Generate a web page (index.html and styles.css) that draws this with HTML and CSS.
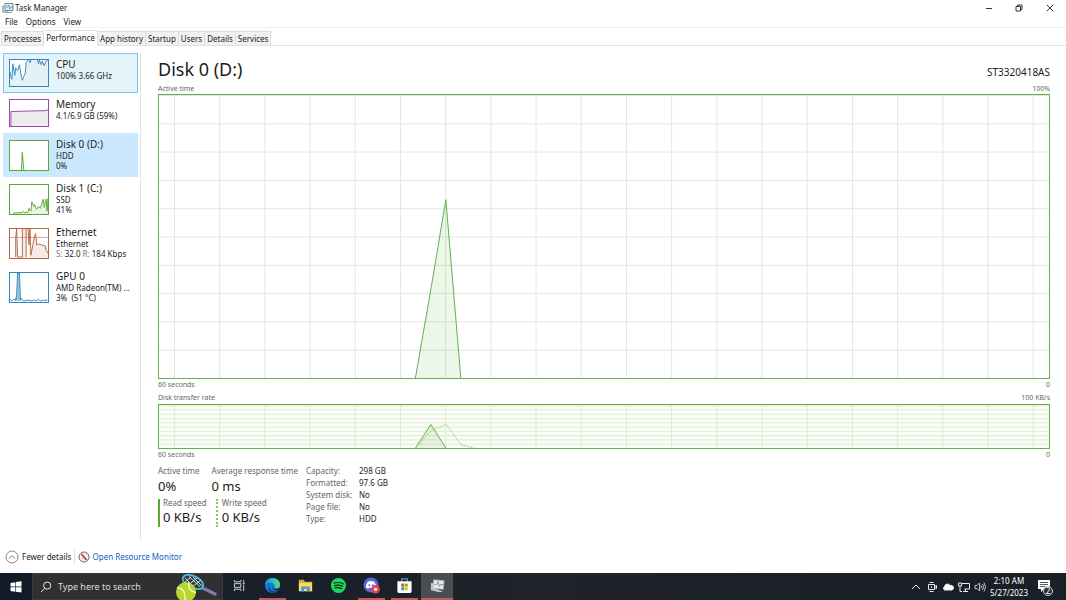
FILE: index.html
```html
<!DOCTYPE html>
<html lang="en">
<head>
<meta charset="utf-8">
<title>Task Manager</title>
<link rel="stylesheet" href="styles.css">
</head>
<body>
<header class="titlebar">
  <svg class="app-icon" viewBox="0 0 12 12"><path d="M3 1.500h8v7H3z" fill="#d9eef5" stroke="#6c8b99"/><path d="M4 5h1.500l1-2 1.500 4 1-2h2" fill="none" stroke="#3d8fae" stroke-width=".8"/><path d="M1 4v6h5M1 4h1" fill="none" stroke="#777"/><path d="M5 10.500h5" stroke="#8b9da5"/></svg>
  <h1 class="app-title">Task Manager</h1>
  <div class="window-buttons">
    <button aria-label="Minimize"><svg viewBox="0 0 8 8"><path d="M1 4.500h6"/></svg></button>
    <button aria-label="Restore"><svg viewBox="0 0 8 8"><path d="M1 2.500h4.500V7H1zM2.500 2.500V1H7v4.500H5.500"/></svg></button>
    <button aria-label="Close"><svg viewBox="0 0 8 8"><path d="M.8.8l6.400 6.400M7.200.8L.8 7.200"/></svg></button>
  </div>
</header>
<nav class="menu"><button>File</button><button>Options</button><button>View</button></nav>
<div class="tabs" role="tablist">
  <button role="tab">Processes</button><button role="tab" class="active" aria-selected="true">Performance</button><button role="tab">App history</button><button role="tab">Startup</button><button role="tab">Users</button><button role="tab">Details</button><button role="tab">Services</button>
</div>
<main class="main">
  <aside class="sidebar">
    <button class="item short hover">
      <svg class="thumb cpu" viewBox="0 0 40 27" preserveAspectRatio="none"><path class="fill" d="M0 12L2 20 3 4 5 16 6 8 8 13 10 6 12 21 14 17 16 14 17 3 19 0 20 3 22 0H29L30 4 31 0 33 5 34 1 36 6 38 1 40 0V27H0z"/><path d="M0 12L1 18 2 20 3 4 5 16 6 8 8 11 10 5 12 18 13 21 15 16 16 14 17 3 19 0M20 0L21 3 22 0M29 0L30 4 31 0 33 5 34 1 36 6 38 1 40 0"/></svg>
      <span class="info"><span class="name">CPU</span><span>100% 3.66 GHz</span></span>
    </button>
    <button class="item short">
      <svg class="thumb memory" viewBox="0 0 40 27" preserveAspectRatio="none"><path class="fill" d="M1 27V12L38 11 40 10V27z"/><path d="M1 27V12L38 11 40 10"/></svg>
      <span class="info"><span class="name">Memory</span><span>4.1/6.9 GB (59%)</span></span>
    </button>
    <button class="item selected">
      <svg class="thumb disk" viewBox="0 0 40 31" preserveAspectRatio="none"><path class="fill" d="M12 31L13 12 14.500 31z"/><path d="M12 31L13 12 14.500 31"/></svg>
      <span class="info"><span class="name">Disk 0 (D:)</span><span>HDD</span><span>0%</span></span>
    </button>
    <button class="item">
      <svg class="thumb disk" viewBox="0 0 40 31" preserveAspectRatio="none"><path class="fill" d="M3 30L18 29 20 25 22 28 23 18 25 23 26 21 28 26 30 23 32 25 34 18 35 15 36 24 38 15 40 27V31H3z"/><path d="M3 30L13 29.500 14 28 15 29.500 19 29 20 25 22 28 23 18 25 23 26 21 28 26 30 23 32 25 34 18 35 15 36 24 38 15 39 28 40 14"/></svg>
      <span class="info"><span class="name">Disk 1 (C:)</span><span>SSD</span><span>41%</span></span>
    </button>
    <button class="item">
      <svg class="thumb ethernet" viewBox="0 0 40 31" preserveAspectRatio="none"><path class="fill" d="M6 31V0L8 31zM13 31V0H17V31zM20 31V0L22 18 23 28 26 5 28 17 37 18 40 26V31z"/><path d="M0 9H40" opacity=".6"/><path d="M6 30V10L7 0 8 30H13V0M17 30V0M19 0L20 17 21 0 22 28 26 7 27 5 28 17 30 16 37 18 38 23 40 26"/></svg>
      <span class="info"><span class="name">Ethernet</span><span>Ethernet</span><span><i>S:</i> 32.0 <i>R:</i> 184 Kbps</span></span>
    </button>
    <button class="item">
      <svg class="thumb gpu" viewBox="0 0 40 31" preserveAspectRatio="none"><path class="strong" d="M5 30L7 23 8 0H10L11 30z"/><path d="M0 28L2 30 4 28 6 29 7 23 8 0H10L11 29 12 27 14 30 20 29 22 30 26 29 27 30 30 28 32 30 36 29 38 30 39 28"/></svg>
      <span class="info"><span class="name">GPU 0</span><span>AMD Radeon(TM) ...</span><span>3% &nbsp;(51 °C)</span></span>
    </button>
  </aside>
  <section class="detail">
    <div class="heading"><h2>Disk 0 (D:)</h2><span class="model">ST3320418AS</span></div>
    <div class="caption"><span>Active time</span><span>100%</span></div>
    <svg class="chart active-chart" viewBox="0 0 892 284" preserveAspectRatio="none" role="img" aria-label="Active time graph">
      <defs>
        <pattern id="cols" x="15" width="45.300" height="284" patternUnits="userSpaceOnUse"><path class="grid" d="M.5 0V284"/></pattern>
        <pattern id="rows" width="892" height="28.400" patternUnits="userSpaceOnUse"><path class="grid" d="M0 .5H892"/></pattern>
      </defs>
      <rect width="892" height="284" fill="url(#rows)"/><rect width="892" height="284" fill="url(#cols)"/>
      <path class="area" d="M257 284L273 192 287.500 105 302.500 284"/>
    </svg>
    <div class="caption"><span>60 seconds</span><span>0</span></div>
    <div class="caption below"><span>Disk transfer rate</span><span>100 KB/s</span></div>
    <svg class="chart rate-chart" viewBox="0 0 892 44" preserveAspectRatio="none" role="img" aria-label="Disk transfer rate graph">
      <defs>
        <pattern id="fine-rows" width="892" height="4.400" patternUnits="userSpaceOnUse"><path class="grid" d="M0 .5H892"/></pattern>
      </defs>
      <rect width="892" height="44" fill="url(#fine-rows)"/><rect width="892" height="44" fill="url(#cols)"/>
      <path class="area" d="M257 44L272.500 20 287.500 44"/>
      <path class="write" d="M257 44L273 26 288 20 303 41 316 44"/>
    </svg>
    <div class="caption"><span>60 seconds</span><span>0</span></div>
    <div class="stats">
      <dl class="stat-grid">
        <div><dt>Active time</dt><dd>0%</dd></div>
        <div><dt>Average response time</dt><dd>0 ms</dd></div>
      </dl>
      <dl class="stat-grid speeds">
        <div class="read"><dt>Read speed</dt><dd>0 KB/s</dd></div>
        <div class="written"><dt>Write speed</dt><dd>0 KB/s</dd></div>
      </dl>
      <table class="props">
        <tr><th scope="row">Capacity:</th><td>298 GB</td></tr>
        <tr><th scope="row">Formatted:</th><td>97.6 GB</td></tr>
        <tr><th scope="row">System disk:</th><td>No</td></tr>
        <tr><th scope="row">Page file:</th><td>No</td></tr>
        <tr><th scope="row">Type:</th><td>HDD</td></tr>
      </table>
    </div>
  </section>
</main>
<footer class="footer">
  <button class="fewer"><svg viewBox="0 0 14 14"><circle cx="7" cy="7" r="6" fill="none" stroke="#777" stroke-width=".9"/><path d="M4 8.500l3-3 3 3" fill="none" stroke="#777"/></svg>Fewer details</button>
  <a class="monitor" href="#"><svg viewBox="0 0 12 12"><circle cx="6" cy="6" r="5" fill="#f5f5f5" stroke="#667" /><path d="M3.500 3L8.500 9" stroke="#cb3033" stroke-width="1.700"/><path d="M4 8l1-1M8 4l.7-.7" stroke="#777" stroke-width=".8"/></svg>Open Resource Monitor</a>
</footer>
<div class="taskbar">
  <button class="start" aria-label="Start"><svg viewBox="0 0 12 12"><path fill="#fff" d="M.5 1.900L5.300 1.200v4.400H.5zM5.900 1.100L11.500.3v5.300H5.900zM.5 6.200h4.800v4.500L.5 10zM5.900 6.200h5.600v5.400l-5.600-.8z"/></svg></button>
  <label class="search">
    <svg class="glass" viewBox="0 0 12 12"><circle cx="7.200" cy="4.600" r="3.600" fill="none" stroke="#e5e5e5"/><path d="M4.600 7.300L1 11" stroke="#e5e5e5"/></svg>
    <input type="text" placeholder="Type here to search" aria-label="Type here to search">
    <svg class="tennis" viewBox="0 0 44 26"><path d="M25 14l7 2" stroke="#38a7cb" stroke-width="2"/><path d="M30 15l10 5" stroke="#8a76ab" stroke-width="3.500" stroke-linecap="round"/><ellipse cx="18" cy="8" rx="11" ry="6" transform="rotate(25 18 8)" fill="#303e48" stroke="#4eb9d6" stroke-width="1.800"/><path d="M10 4l10 10M14 2.500l11 10M18 3l9 9M9 9l7-6M12 12l10-8M17 13l9-7" stroke="#dfe9e9" stroke-width=".9"/><circle cx="11" cy="18" r="10" fill="#b8d72c"/><path d="M2 14q9-1 8 14M14 8.500q-2 8 7 10" fill="none" stroke="#f5ffd8" stroke-width="1.300"/></svg>
  </label>
  <button class="task view" aria-label="Task View"><svg viewBox="0 0 14 14" fill="none" stroke="#ddd"><path d="M1.500 1v2h7V1M1.500 13v-2h7v2M1.500 5h7v4h-7zM11.500 1v2M11.500 6v7"/><path d="M10.500 4.500h2" stroke-width="1.500"/></svg></button>
  <button class="task running" aria-label="Microsoft Edge"><svg viewBox="0 0 18 18"><defs><linearGradient id="edge-top" x1="0" x2="1"><stop stop-color="#1597dc"/><stop offset=".55" stop-color="#2ac1cc"/><stop offset="1" stop-color="#67d95d"/></linearGradient></defs><circle cx="9" cy="9" r="8" fill="#1678cf"/><path d="M1 9C1 4 4.500 1 9 1s8 3 8 7c0 3-2 4-4 4-2.500 0-3-1-2-2 1-2-1-4-4-4S1.500 7 1 9z" fill="url(#edge-top)"/><path d="M7.500 8c-4 3 0 8 7 6.500-1.500 1.800-3.500 2.500-5.500 2.500-5 0-6-6-1.500-9z" fill="#0d4f9d"/><path d="M9.500 8.500c-1.500 3 2 5 6 3.800l1 .3-.8 1.200c-5 1.500-8-2-6.200-5.300z" fill="#20242f"/></svg></button>
  <button class="task" aria-label="File Explorer"><svg viewBox="0 0 18 18"><path d="M2 3h5l1.500 2H16v10H2z" fill="#dca62d"/><path d="M2 6h14v9H2z" fill="#ffd968"/><path d="M4.500 15v-5h9v5h-3v-2.500h-3V15z" fill="#3c9ed7"/></svg></button>
  <button class="task" aria-label="Spotify"><svg viewBox="0 0 18 18"><circle cx="9" cy="9" r="8" fill="#1ed760"/><path d="M4.300 6.400q5-1.500 9.700.9M4.800 9.100q4.500-1.200 8.300.8M5.300 11.600q3.700-1 6.900.7" fill="none" stroke="#17251d" stroke-width="1.300" stroke-linecap="round"/></svg></button>
  <button class="task running" aria-label="Discord"><svg viewBox="0 0 18 18"><circle cx="8.500" cy="8.500" r="8" fill="#5865d8"/><path d="M5 5q3.500-1.500 7 0 2 3 2 6l-2.500 1.500-1-1.200h-4l-1 1.200L3 11q0-3 2-6z" fill="#fff"/><circle cx="6.700" cy="8.800" r="1.100" fill="#5865d8"/><circle cx="10.400" cy="8.800" r="1.100" fill="#5865d8"/><circle cx="13.300" cy="13" r="4.500" fill="#e8444e"/><circle cx="13.300" cy="13" r="1.600" fill="#fff"/></svg></button>
  <button class="task running" aria-label="Microsoft Store"><svg viewBox="0 0 18 18"><path d="M6 5V2h6v3" fill="none" stroke="#36a8dc" stroke-width="1.300"/><path d="M1.500 4.500h15V15q0 2-2 2h-11q-2 0-2-2z" fill="#fff"/><path d="M5.500 7H8.700v3.200H5.500z" fill="#f25022"/><path d="M9.300 7h3.200v3.200H9.300z" fill="#7fba00"/><path d="M5.500 10.800H8.700V14H5.500z" fill="#00a4ef"/><path d="M9.300 10.800h3.200V14H9.300z" fill="#ffb900"/></svg></button>
  <button class="task running current" aria-label="Task Manager"><svg viewBox="0 0 18 18"><path d="M5 3l11 1-1 9-11-1z" fill="#e5eaec" stroke="#aab2b5"/><path d="M6 8h2l1.500-3 1.500 5 1-2h3" fill="none" stroke="#7d959d"/><path d="M2 6l3 1-1 5 6 1v3l-8-2z" fill="#bec7ca"/><path d="M10 14l4 1v1l-5-.5z" fill="#ddd"/></svg></button>
  <div class="tray">
    <button aria-label="Show hidden icons"><svg viewBox="0 0 12 12"><path d="M2 8l4-4 4 4"/></svg></button>
    <button aria-label="Meet Now"><svg viewBox="0 0 12 12"><path d="M2.500 3.500h6v5h-6zM8.500 5.500l2-1v3l-2-1M3.500 1.500h4M3.500 10.500h4"/><circle cx="5.500" cy="6" r=".5"/></svg></button>
    <button aria-label="OneDrive"><svg viewBox="0 0 12 12"><path d="M2.500 9a2 2 0 010-3.500A3 3 0 018 4.500 2.300 2.300 0 0110 9z" fill="#fff"/></svg></button>
    <button aria-label="Network"><svg viewBox="0 0 12 12"><path d="M3.500 2.500h8v5.500h-5M7.500 8v2.500M5 10.500h5M.5 2h3v3h-3zM2 5v5.500h2"/></svg></button>
    <button aria-label="Volume"><svg viewBox="0 0 12 12"><path d="M1 4.500h2L5.500 2v8L3 7.500H1zM7 4.500q1 1.500 0 3M8.500 3q2 3 0 6M10 1.500q3 4.500 0 9" stroke-width=".8"/></svg></button>
  </div>
  <time class="clock" datetime="2023-05-27T02:10"><span>2:10 AM</span><span>5/27/2023</span></time>
  <button class="notify" aria-label="2 notifications"><svg viewBox="0 0 16 16"><path d="M1 1h12v9H7l-3 3v-3H1z" fill="#fff"/><path d="M3 3.500h8M3 5.500h8M3 7.500h5" stroke="#29303a" stroke-width=".8"/></svg><span class="badge">2</span></button>
</div>
</body>
</html>
```
FILE: styles.css
```css
* { box-sizing: border-box; }
body {
  margin: 0;
  min-height: 100vh;
  display: flex;
  flex-direction: column;
  background: #fff;
  color: #1c1c1c;
  font: 8px/10px "Noto Sans", "Open Sans", sans-serif;
}
button { padding: 0; border: 0; background: none; color: inherit; font: inherit; text-align: left; }
svg { display: block; flex: none; }
h1, h2, dl, dd { margin: 0; font-weight: 400; }

.titlebar { display: flex; align-items: center; height: 15px; padding-left: 2px; }
.app-icon { width: 12px; height: 12px; margin-right: 1px; }
.app-title { font-size: 8px; }
.window-buttons { display: flex; margin-left: auto; }
.window-buttons button { display: flex; justify-content: center; width: 30px; }
.window-buttons button:last-child { width: 32px; }
.window-buttons svg { width: 8px; height: 8px; fill: none; stroke: #333; }

.menu { display: flex; gap: 8px; height: 13px; padding: 2px 5px 0; border-bottom: 1px solid #f2f2f2; }
.tabs { display: flex; align-items: flex-end; height: 18px; padding-left: 1px; border-bottom: 1px solid #e2e2e2; }
.tabs button { height: 14px; padding: 0 2px; background: #f1f1f1; border: 1px solid #ddd; border-left: 0; border-bottom: 0; white-space: nowrap; }
.tabs button:first-child { border-left: 1px solid #ddd; }
.tabs .active { height: 16px; margin-bottom: -1px; padding-bottom: 2px; background: #fff; }

.main { flex: 1; display: flex; padding-top: 7px; }
.sidebar { width: 141px; flex: none; display: flex; flex-direction: column; padding: 0 2px 0 3px; border-right: 1px solid #e3e3e3; }
.item { display: flex; align-items: flex-start; gap: 7px; height: 44px; padding: 7px 0 0 6px; }
.item.short { height: 40px; padding-top: 6px; }
.item.hover { padding: 5px 0 0 5px; border: 1px solid #7ec4ea; background: #e5f3fa; }
.item.selected { background: #cce8ff; }
.thumb { width: 40px; height: 31px; border: 1px solid; background: #fff; stroke: currentColor; fill: none; stroke-width: 1; }
.short .thumb { height: 28px; }
.fill { fill: currentColor; fill-opacity: .12; stroke: none; }
.memory .fill { fill: #666; }
.strong { fill: currentColor; fill-opacity: .5; stroke: none; }
.cpu, .gpu { color: #3588bd; }
.memory { color: #9a48b5; }
.disk { color: #56a935; }
.ethernet { color: #b7653d; }
.info { display: flex; flex-direction: column; margin-top: -2px; white-space: nowrap; }
.name { font-size: 10px; line-height: 13px; }
.short .info { margin-top: -1px; }
.item i { color: #777; font-style: normal; }

.detail { flex: 1; min-width: 0; padding: 4px 16px 0 17px; }
.heading { display: flex; justify-content: space-between; align-items: flex-end; height: 26px; }
.heading h2 { font-size: 18px; line-height: 28px; }
.model { font-size: 10px; line-height: 22px; }
.caption { display: flex; justify-content: space-between; height: 12px; color: #666; font-size: 7px; line-height: 12px; }
.caption.below { height: 13px; line-height: 13px; }
.chart { width: 100%; border: 1px solid #68ad52; background: #fff; }
.active-chart { height: 285px; margin-top: -1px; }
.rate-chart { height: 45px; background: #fafdf8; }
.grid { fill: none; stroke: #dfead3; }
.area { fill: #56a935; fill-opacity: .11; stroke: #68ad52; stroke-width: 1; }
.write { fill: none; stroke: #92d362; stroke-dasharray: 2 1; }
.stats { display: grid; grid-template-columns: 148px auto; justify-content: start; row-gap: 3px; padding-top: 4px; }
.stat-grid { display: flex; gap: 12px; white-space: nowrap; }
dt { color: #666; line-height: 11px; }
dd { font-size: 13px; line-height: 20px; }
.speeds { gap: 9px; }
.speeds dt { line-height: 8px; }
.read { padding-left: 3px; border-left: 2px solid #56a935; }
.written { padding-left: 4px; border-left: 2px dotted #8acb4c; }
.props { grid-area: 1 / 2 / 3 / 3; align-self: start; border-collapse: collapse; }
.props th { width: 53px; padding: 0; color: #666; font-weight: 400; text-align: left; }
.props td { padding: 0; }
.props tr { height: 12px; }

.footer { display: flex; align-items: center; height: 33px; padding-left: 5px; }
.fewer { display: flex; align-items: center; gap: 3px; padding-right: 3px; border-right: 1px solid #ddd; }
.fewer svg { width: 14px; height: 14px; }
.monitor { display: flex; align-items: center; gap: 2px; margin-left: 3px; color: #0f62c4; text-decoration: none; }
.monitor svg { width: 12px; height: 12px; }

.taskbar { display: flex; height: 27px; background: linear-gradient(90deg, #111c28, #202329 50%, #181f26); color: #fff; }
.start { display: grid; place-items: center; width: 32px; }
.start svg { width: 12px; height: 12px; }
.search { display: flex; align-items: center; width: 191px; padding: 0 3px 0 7px; background: #303030; border: 1px solid #3c3c3c; }
.glass { width: 12px; height: 12px; }
.search input { flex: 1; min-width: 0; padding: 0 0 0 6px; border: 0; background: none; color: #fff; font: 9px/14px "Noto Sans", sans-serif; }
.search input::placeholder { color: #ddd; }
.tennis { width: 44px; height: 26px; }
.task { display: grid; place-items: center; width: 27px; margin: 0 3px; border-bottom: 2px solid transparent; }
.task svg { width: 17px; height: 17px; }
.task.view svg { width: 13px; height: 13px; }
.running { border-bottom-color: #c45961; }
.task.current { width: 32px; margin: 0; background: #4a4d51; }
.tray { display: flex; align-items: center; gap: 4px; margin-left: auto; }
.tray svg { width: 12px; height: 12px; fill: none; stroke: #e8e8e8; }
.clock { display: flex; flex-direction: column; justify-content: center; width: 46px; line-height: 12px; text-align: center; }
.notify { position: relative; display: flex; align-items: center; width: 34px; padding-left: 5px; }
.notify svg { width: 16px; height: 16px; }
.badge { position: absolute; left: 11px; top: 13px; width: 10px; height: 10px; border: 1px solid #ccc; border-radius: 50%; background: #29303a; line-height: 8px; text-align: center; }
```
